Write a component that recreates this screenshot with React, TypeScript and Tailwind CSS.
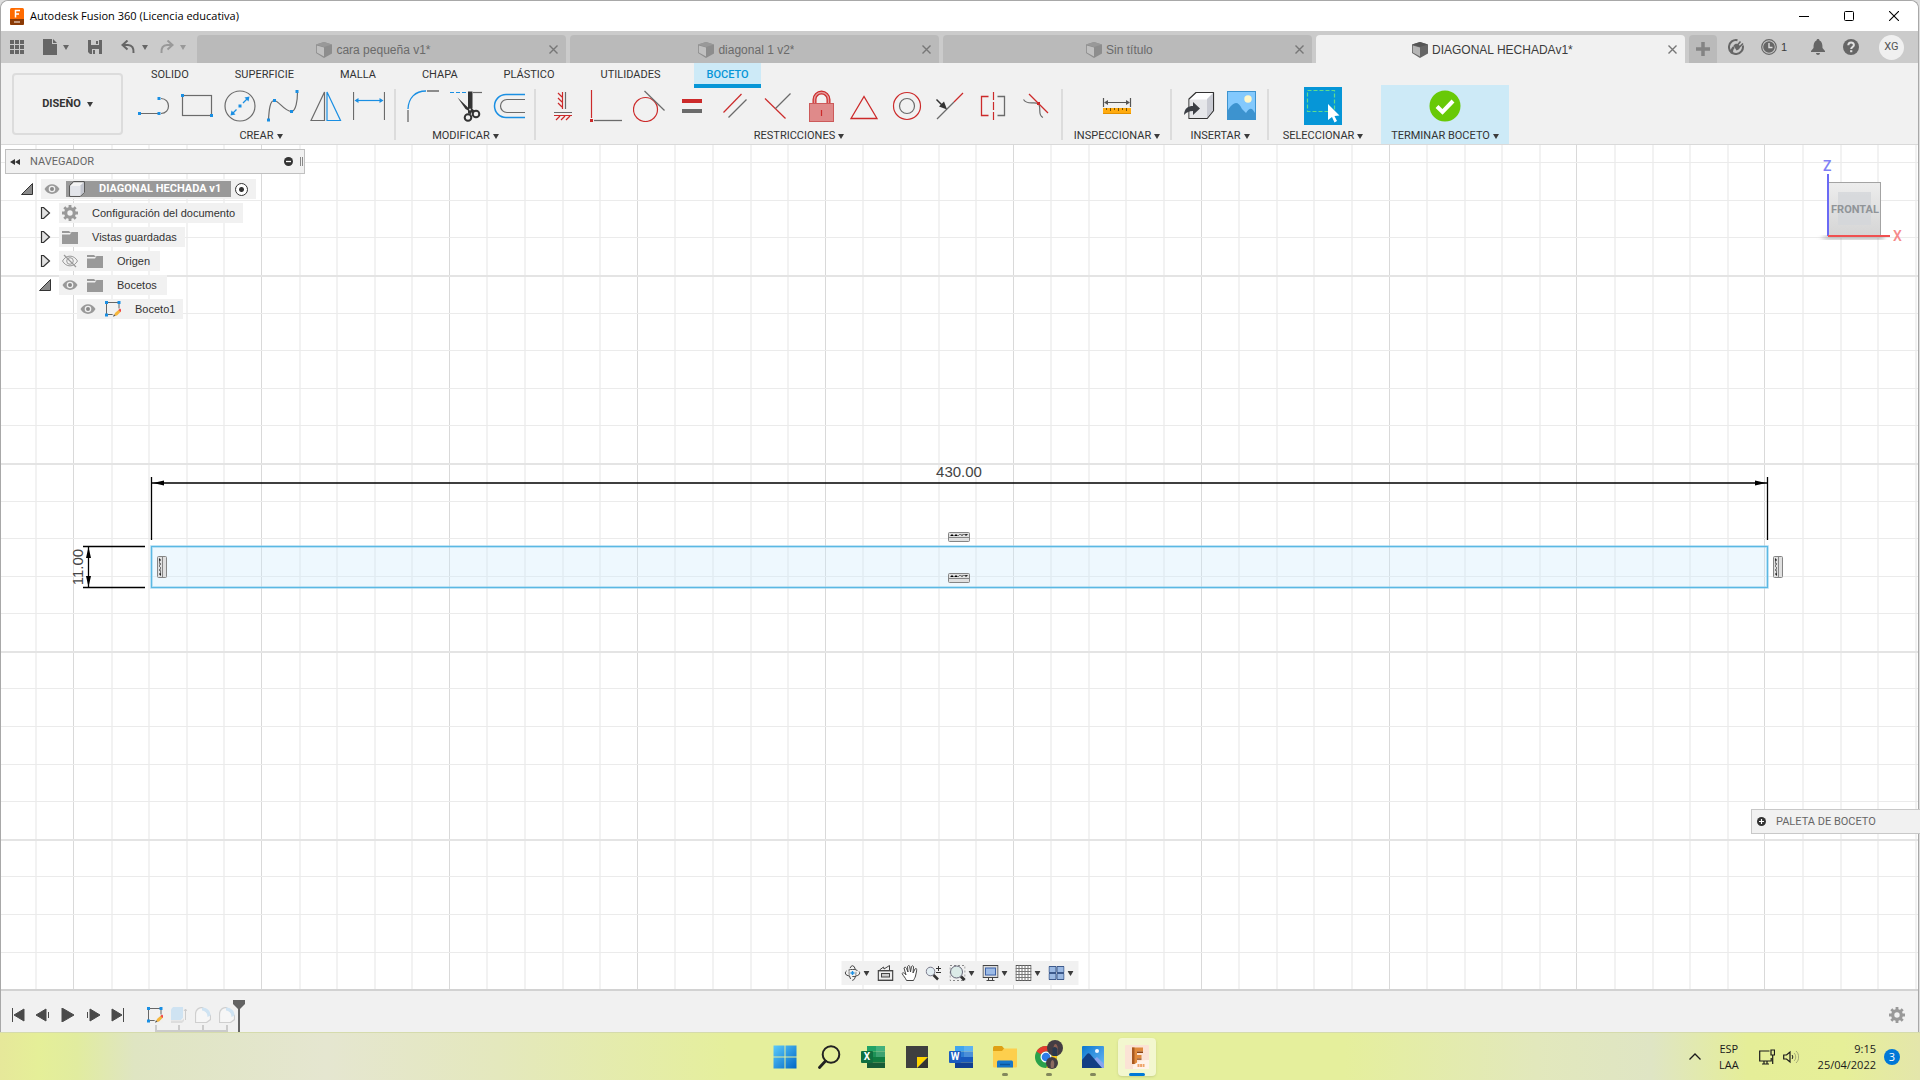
import { type ReactNode } from "react";
import { clsx } from "clsx";

const BLUE = "#1a8fe3";
const GREY = "#6b6b6b";
const RED = "#cc2a2a";

const Caret = ({ className = "text-[#3c3c3c]" }: { className?: string }) => (
  <svg viewBox="0 0 6 5" className={clsx("h-[5px] w-[6px] shrink-0", className)} aria-hidden>
    <path d="M0 0h6L3 5z" fill="currentColor" />
  </svg>
);

const Svg = ({ size = 32, className, children }: { size?: number; className?: string; children: ReactNode }) => (
  <svg
    width={size}
    height={size}
    viewBox={`0 0 ${size} ${size}`}
    fill="none"
    className={clsx("shrink-0", className)}
    aria-hidden
  >
    {children}
  </svg>
);

const Dot = ({ x, y, c = BLUE }: { x: number; y: number; c?: string }) => (
  <rect x={x - 1.5} y={y - 1.5} width="3" height="3" fill={c} />
);

/* ---------- ribbon icons ---------- */

const createTools: { label: string; icon: ReactNode }[] = [
  {
    label: "Línea",
    icon: (
      <Svg>
        <path d="M1.5 23.5H21M23 8.5c10 0 10 15 0 15" stroke={GREY} strokeWidth="1.2" />
        <Dot x={1.5} y={23.5} />
        <Dot x={21} y={23.5} />
        <Dot x={21} y={8.5} />
      </Svg>
    ),
  },
  {
    label: "Rectángulo",
    icon: (
      <Svg>
        <rect x="1.5" y="5.5" width="29" height="20" stroke={GREY} strokeWidth="1.2" />
        <Dot x={1.5} y={5.5} />
        <Dot x={30.5} y={25.5} />
      </Svg>
    ),
  },
  {
    label: "Círculo",
    icon: (
      <Svg>
        <circle cx="16" cy="16" r="15" stroke={GREY} strokeWidth="1.2" />
        <path d="M8.5 23.5l4-4M19 13l4.5-4.5" stroke={BLUE} strokeWidth="1.3" />
        <path d="M6.5 25.5l1-5 4 4zM25.5 6.5l-1 5-4-4z" fill={BLUE} />
        <Dot x={16} y={16} />
      </Svg>
    ),
  },
  {
    label: "Spline",
    icon: (
      <Svg>
        <path d="M1.5 30C2 20 3 10 7.5 10.5S17 21 24.5 21.5C29 21 30.5 10 30.5 2" stroke={GREY} strokeWidth="1.2" />
        <Dot x={1.5} y={30} />
        <Dot x={7.5} y={10.5} />
        <Dot x={24.5} y={21.5} />
        <Dot x={30} y={1.5} />
      </Svg>
    ),
  },
  {
    label: "Simetría",
    icon: (
      <Svg>
        <path d="M1 30.5L14.5 2v28.5z" stroke={GREY} strokeWidth="1.2" />
        <path d="M17 30.5V2l13.5 28.5z" stroke={BLUE} strokeWidth="1.2" />
      </Svg>
    ),
  },
  {
    label: "Cota",
    icon: (
      <Svg>
        <path d="M.5 2v28M31.5 2v28" stroke={GREY} strokeWidth="1.2" />
        <path d="M3 10.5h26" stroke={BLUE} strokeWidth="1.2" />
        <path d="M1.5 10.5l4-2.5v5zM30.5 10.5l-4-2.5v5z" fill={BLUE} />
      </Svg>
    ),
  },
];

const modifyTools: { label: string; icon: ReactNode }[] = [
  {
    label: "Empalme",
    icon: (
      <Svg>
        <path d="M1 19C1.5 8 8 1 19 1" stroke={BLUE} strokeWidth="1.3" />
        <path d="M20 1h12M1 20v12" stroke={GREY} strokeWidth="1.3" />
      </Svg>
    ),
  },
  {
    label: "Recortar",
    icon: (
      <Svg>
        <path d="M0 2.5h17" stroke={BLUE} strokeWidth="1.2" strokeDasharray="4 2" />
        <path d="M23 2.5h9" stroke={GREY} strokeWidth="1.2" />
        <path d="M7.5 7.5l12 11.5 2.5-.5 3.5 3-3 1.5-7-4zM18 1.5h4.5V18l-1.5 6-3-.5z" fill="#333" />
        <circle cx="18" cy="27.5" r="3.3" stroke="#333" strokeWidth="2" />
        <circle cx="26" cy="24" r="3.3" stroke="#333" strokeWidth="2" />
        <circle cx="20" cy="19.5" r="1" fill="#ddd" />
      </Svg>
    ),
  },
  {
    label: "Desfase",
    icon: (
      <Svg>
        <path d="M32 4.5H13a11.5 11.5 0 0 0 0 23h19" stroke={BLUE} strokeWidth="1.5" />
        <path d="M32 9.5H14a6.5 6.5 0 0 0 0 13h18" stroke={GREY} strokeWidth="1.2" />
      </Svg>
    ),
  },
];

const constraintTools: { label: string; icon: ReactNode }[] = [
  {
    label: "Horizontal/Vertical",
    icon: (
      <Svg>
        <path
          d="M15.5 2v17M15 7l-4-4M15 12l-4-4M15 17l-4-4M7 25.5h18M9 30l4-4M14 30l4-4M19 30l4-4"
          stroke={RED}
          strokeWidth="1.2"
        />
        <path d="M18.5 2v17M7 22.5h18" stroke={GREY} strokeWidth="1.2" />
      </Svg>
    ),
  },
  {
    label: "Perpendicular",
    icon: (
      <Svg>
        <path d="M1.5 0v28" stroke={RED} strokeWidth="1.2" />
        <path d="M4 30.5h28" stroke={GREY} strokeWidth="1.3" />
        <Dot x={1.5} y={30.5} c={RED} />
      </Svg>
    ),
  },
  {
    label: "Tangente",
    icon: (
      <Svg>
        <circle cx="12.5" cy="19.5" r="12" stroke={RED} strokeWidth="1.2" />
        <path d="M11.5 1l20 19.5" stroke={GREY} strokeWidth="1.2" />
      </Svg>
    ),
  },
  {
    label: "Igual",
    icon: (
      <Svg>
        <path d="M6 11h20" stroke={RED} strokeWidth="4" />
        <path d="M6 21h20" stroke={GREY} strokeWidth="4" />
      </Svg>
    ),
  },
  {
    label: "Paralela",
    icon: (
      <Svg>
        <path d="M4.5 22.5L22.5 4" stroke={RED} strokeWidth="1.2" />
        <path d="M9.5 27.5l18-18" stroke={GREY} strokeWidth="1.2" />
      </Svg>
    ),
  },
  {
    label: "Coincidente",
    icon: (
      <Svg>
        <path d="M3 8.5l20.5 20" stroke={RED} strokeWidth="1.2" />
        <path d="M13.5 18.5l15-15" stroke={GREY} strokeWidth="1.2" />
      </Svg>
    ),
  },
  {
    label: "Fijar",
    icon: (
      <Svg>
        <path d="M9.5 13V9.5a7 7 0 0 1 14 0V13" stroke={RED} strokeWidth="4" />
        <path d="M9.5 13V9.5a7 7 0 0 1 14 0V13" stroke="#e39a9a" strokeWidth="1.5" />
        <rect x="4.5" y="13.5" width="24" height="18" fill="#df8a8a" stroke="#cc5a5a" />
        <path d="M16.5 20v6" stroke={RED} strokeWidth="1.2" />
      </Svg>
    ),
  },
  {
    label: "Punto medio",
    icon: (
      <Svg>
        <path d="M3 28.5L16 6.5l13 22z" stroke={RED} strokeWidth="1.3" />
      </Svg>
    ),
  },
  {
    label: "Concéntrica",
    icon: (
      <Svg>
        <circle cx="16" cy="16" r="13.5" stroke={RED} strokeWidth="1.2" />
        <circle cx="16" cy="16" r="7.5" stroke={GREY} strokeWidth="1.2" />
      </Svg>
    ),
  },
  {
    label: "Colineal",
    icon: (
      <Svg>
        <path d="M3 29l17-17" stroke={GREY} strokeWidth="1.2" />
        <path d="M20 12l9-9" stroke={RED} strokeWidth="1.3" />
        <path d="M2.5 9.5l6 6" stroke="#333" strokeWidth="1.5" />
        <path d="M13 19.5l-8-3 5-5z" fill="#333" />
      </Svg>
    ),
  },
  {
    label: "Simétrica",
    icon: (
      <Svg>
        <path d="M11.5 6.5h-7v19h7" stroke={RED} strokeWidth="1.3" />
        <path d="M20.5 6.5h7v19h-7" stroke={GREY} strokeWidth="1.3" />
        <path d="M16.5 2v28" stroke={RED} strokeWidth="1.2" strokeDasharray="8 2" />
      </Svg>
    ),
  },
  {
    label: "Curvatura",
    icon: (
      <Svg>
        <path d="M3.5 9.5c4 6 10 2 14.5 4 4 3-1 12 5 14" stroke={GREY} strokeWidth="1.2" />
        <path d="M9 4l19 19" stroke={RED} strokeWidth="1.2" />
        <Dot x={18.5} y={13.5} c={RED} />
      </Svg>
    ),
  },
];

const MeasureIcon = () => (
  <Svg>
    <path d="M2.5 8v9M29.5 8v9M4 12.5h24" stroke="#555" strokeWidth="1.2" />
    <path d="M3 12.5l4-2.5v5zM29 12.5L25 10v5z" fill="#555" />
    <rect x="2" y="18" width="28" height="6" fill="#ffab0f" />
    <path d="M2 23.5h28" stroke="#e39100" />
    <path d="M5.5 18v2M9.5 18v3M13.5 18v2M17.5 18v3M21.5 18v2M25.5 18v3" stroke="#7a5200" />
  </Svg>
);

const InsertIcon = () => (
  <Svg>
    <path d="M6 9l7-6.5h17.5v18L24 28.5H6z" fill="#fff" stroke="#333" strokeLinejoin="round" strokeWidth="1.2" />
    <path d="M24 9l6-6v17.5l-6 7.5z" fill="#c9cbd3" />
    <path d="M6.6 9.5H24V28H6.6z" fill="#e6e7ea" />
    <path d="M1 25c.5-7 4-9 9-9v-4l7 6.5-7 6.5v-4c-4 0-6 1-9 4z" fill="#3c3f45" />
  </Svg>
);

const ImageIcon = () => (
  <Svg>
    <rect x="1.5" y="1.5" width="28" height="28" fill="#83c9fd" stroke="#3d93cf" />
    <path d="M2 20c6-9 10-9 14-1l4 4c4-6 6-5 9 0v6.5H2z" fill="#3d93cf" />
    <circle cx="22" cy="9" r="3.7" fill="#fff7c9" />
  </Svg>
);

const SelectIcon = () => (
  <Svg size={38} className="bg-[#0696d7]">
    <rect x="3.5" y="3.5" width="27" height="21" stroke="#5fdc8c" strokeWidth="1.2" strokeDasharray="4 2" />
    <path d="M24 17v16l4-3 2.5 5.5 2.5-1.5-2.5-5 5-.5z" fill="#fff" />
  </Svg>
);

const CheckIcon = () => (
  <Svg>
    <circle cx="16" cy="16" r="15.5" fill="#68c907" />
    <path d="M8 16.5l5.5 5.5L24 11" stroke="#fff" strokeWidth="4" />
  </Svg>
);

/* ---------- small icons ---------- */

const CubeTab = ({ active }: { active?: boolean }) => (
  <Svg size={16}>
    <path d="M8 0l8 2.5v9L8 16 0 11V2.5z" fill={active ? "#666" : "#8d8d8d"} />
    <path d="M.8 3.5L8 5.5v9L.8 10.5z" fill={active ? "#b5b5b5" : "#c0c0c0"} />
    <path d="M8 0l8 2.5-8 2.5-8-2.5z" fill={active ? "#555" : "#999"} />
  </Svg>
);

const Eye = ({ off }: { off?: boolean }) => (
  <Svg size={16}>
    <path
      d="M.5 8C4 1.5 12 1.5 15.5 8 12 14.5 4 14.5.5 8z"
      fill={off ? "none" : "#999"}
      stroke={off ? "#999" : "none"}
    />
    <circle cx="8" cy="8" r="3.3" fill={off ? "none" : "#efefef"} stroke={off ? "#999" : "none"} />
    {off ? <path d="M2 2l12 12" stroke="#999" strokeWidth="1.2" /> : <circle cx="8" cy="8" r="2" fill="#888" />}
  </Svg>
);

const Folder = () => (
  <Svg size={16}>
    <path d="M0 2h7l2 2H0z" fill="#999" />
    <path d="M0 5.5h8L9.5 3H16v12H0z" fill="#999" />
  </Svg>
);

const Gear = () => (
  <Svg size={16}>
    <circle cx="8" cy="8" r="4.3" stroke="#999" strokeWidth="3.2" />
    <path
      d="M8 0v3M8 13v3M0 8h3M13 8h3M2.3 2.3l2.2 2.2M11.5 11.5l2.2 2.2M13.7 2.3l-2.2 2.2M4.5 11.5l-2.2 2.2"
      stroke="#999"
      strokeWidth="2.8"
    />
  </Svg>
);

const SketchIcon = () => (
  <Svg size={16}>
    <path d="M1.5 1.5H14v12H1.5z" stroke="#666" />
    <path d="M7 16l1-4 6-5 2 2v7z" fill="#f0f0f0" />
    <Dot x={1.5} y={1.5} />
    <Dot x={14} y={1.5} />
    <Dot x={1.5} y={14} />
    <path d="M9 15l1-3 4-3.5 2 2-4 4z" fill="#f5b53a" />
    <path d="M13.5 9L15 7.5 16.5 9l-1 2z" fill="#f0434c" />
    <path d="M8 15.8l1-2.5 1.5 1.5z" fill="#555" />
  </Svg>
);

const BodyIcon = () => (
  <Svg size={16}>
    <path d="M.7 4.5l4-3.8h10.6v10.6l-4 4H.7z" fill="#f4f4f4" stroke="#444" strokeLinejoin="round" />
    <path d="M11.3 4.5l3.5-3.3v10l-3.5 3.6z" fill="#c3c6cf" />
    <path d="M1.2 5h10v9.8h-10z" fill="#e3e5ea" />
  </Svg>
);

const CloseX = () => (
  <svg viewBox="0 0 9 9" className="size-[9px]" fill="none" aria-hidden>
    <path d="M.5.5l8 8M8.5.5l-8 8" stroke="currentColor" strokeWidth="1.4" />
  </svg>
);

/* ---------- window chrome ---------- */

const TitleBar = () => (
  <header className="flex h-[30px] shrink-0 items-center bg-white pl-[9px] pr-[19px]">
    <svg width="14" height="17" viewBox="0 0 14 17" aria-hidden>
      <rect width="14" height="17" rx="1.5" fill="#ff6b00" />
      <path d="M0 11h14v4.5a1.5 1.5 0 0 1-1.5 1.5h-11A1.5 1.5 0 0 1 0 15.5z" fill="#8a3a06" />
      <path d="M5.5 9.5v-7H10M5.5 6H9" stroke="#fff" strokeWidth="1.5" fill="none" />
      <path d="M4 14h6" stroke="#d9b8a3" strokeWidth="1.5" />
    </svg>
    <h1 className="ml-[6px] flex-1 font-['Open_Sans',sans-serif] text-[11px] leading-4 text-black">
      Autodesk Fusion 360 (Licencia educativa)
    </h1>
    <div className="flex items-center gap-[35px] text-black">
      <button type="button" aria-label="Minimizar">
        <svg width="10" height="10" viewBox="0 0 10 10" aria-hidden>
          <path d="M0 5.5h10" stroke="currentColor" />
        </svg>
      </button>
      <button type="button" aria-label="Maximizar">
        <svg width="10" height="10" viewBox="0 0 10 10" fill="none" aria-hidden>
          <rect x=".5" y=".5" width="9" height="9" rx="1" stroke="currentColor" />
        </svg>
      </button>
      <button type="button" aria-label="Cerrar">
        <svg width="10" height="10" viewBox="0 0 10 10" fill="none" aria-hidden>
          <path d="M0 0l10 10M10 0L0 10" stroke="currentColor" strokeWidth="1.1" />
        </svg>
      </button>
    </div>
  </header>
);

const documents = [
  { name: "cara pequeña v1*" },
  { name: "diagonal 1 v2*" },
  { name: "Sin título" },
  { name: "DIAGONAL HECHADAv1*", active: true },
];

const DocumentBar = () => (
  <div className="flex h-8 shrink-0 items-end bg-[#cbcbcb] text-[#666]">
    <div className="flex h-8 w-[196px] shrink-0 items-center pl-[9px]">
      <button type="button" aria-label="Panel de datos">
        <Svg size={14}>
          {[0, 5, 10].map((y) => (
            <path key={y} d={`M0 ${y + 2}h4M5 ${y + 2}h4M10 ${y + 2}h4`} stroke="#666" strokeWidth="4" />
          ))}
        </Svg>
      </button>
      <button type="button" aria-label="Archivo" className="ml-[19px] flex items-center gap-[6px]">
        <svg width="14" height="16" viewBox="0 0 14 16" aria-hidden>
          <path d="M0 0h9v5h5v11H0zM10 0l4 4h-4z" fill="#666" />
        </svg>
        <Caret className="text-[#666]" />
      </button>
      <button type="button" aria-label="Guardar" className="ml-[19px]">
        <Svg size={14}>
          <path d="M0 0h14v14H2l-2-2z" fill="#666" />
          <path d="M3 0h8v5H3zM4 9h7v5H4z" fill="#cbcbcb" />
          <path d="M8 1h2v3H8zM5 10h2v4H5z" fill="#666" />
        </Svg>
      </button>
      <button type="button" aria-label="Deshacer" className="ml-[19px] flex items-center gap-[7px]">
        <Svg size={14}>
          <path d="M2 5h5c4 0 6 3 5.5 8" stroke="#666" strokeWidth="2" />
          <path d="M6.5.5L1.5 5l5 4.5" stroke="#666" strokeWidth="2" />
        </Svg>
        <Caret className="text-[#666]" />
      </button>
      <button type="button" aria-label="Rehacer" className="ml-3 flex items-center gap-[6px]">
        <Svg size={14}>
          <path d="M12 5H7c-4 0-6 3-5.5 8" stroke="#999" strokeWidth="2" />
          <path d="M7.5.5l5 4.5-5 4.5" stroke="#999" strokeWidth="2" />
        </Svg>
        <Caret className="text-[#999]" />
      </button>
    </div>

    <nav className="flex h-7 min-w-0 flex-1 gap-1">
      {documents.map(({ name, active }) => (
        <div
          key={name}
          className={clsx(
            "flex min-w-0 flex-1 items-center rounded-t pl-px pr-2",
            active ? "bg-[#f1f1f1] text-[#3c3c3c]" : "bg-[#bababa] text-[#6a6a6a]",
          )}
        >
          <button type="button" className="flex min-w-0 flex-1 items-center justify-center gap-1 pt-px text-xs">
            <CubeTab active={active} />
            <span className="truncate">{name}</span>
          </button>
          <button type="button" aria-label={`Cerrar ${name}`} className="text-[#777]">
            <CloseX />
          </button>
        </div>
      ))}
    </nav>

    <button
      type="button"
      aria-label="Nuevo diseño"
      className="ml-1 flex h-7 w-7 shrink-0 items-center justify-center rounded-t bg-[#bababa]"
    >
      <Svg size={14}>
        <path d="M7 0v14M0 7h14" stroke="#848484" strokeWidth="3.5" />
      </Svg>
    </button>

    <div className="flex h-8 shrink-0 items-center pl-[11px] pr-[14px]">
      <button type="button" aria-label="Extensiones">
        <Svg size={16}>
          <path d="M9.5 1.2A7 7 0 1 0 14.8 6.5" stroke="#666" strokeWidth="2" />
          <path d="M4 14.5c-.5-3.5 0-5 2-6.5" stroke="#666" strokeWidth="2.4" />
          <path d="M5.5 6.5c1.5-2 3.5-2.5 5-1L12 7c.5 2-1 4-3.5 4.5z" fill="#666" />
          <path d="M9.5 6l3-3.5M11.5 8L15 4.5" stroke="#666" strokeWidth="1.6" />
        </Svg>
      </button>
      <button type="button" className="ml-[17px] flex items-center gap-1 text-[11px] text-[#3c3c3c]">
        <Svg size={16}>
          <circle cx="8" cy="8" r="7.3" stroke="#666" strokeWidth="1.2" />
          <circle cx="8" cy="8" r="5.8" fill="#666" />
          <path d="M8 4v4.5h3.5" stroke="#ddd" strokeWidth="1.4" />
        </Svg>
        1
      </button>
      <button type="button" aria-label="Notificaciones" className="ml-[23px]">
        <Svg size={16}>
          <path
            d="M8 0c1 0 1.5.7 1.5 1.5C12 2.5 12.5 5 12.5 9l2.5 3v1H1v-1l2.5-3c0-4 .5-6.5 3-7.5C6.500.7 7 0 8 0zM6 14h4c0 2.5-4 2.5-4 0z"
            fill="#666"
          />
        </Svg>
      </button>
      <button type="button" aria-label="Ayuda" className="ml-[17px]">
        <Svg size={16}>
          <circle cx="8" cy="8" r="8" fill="#666" />
          <path d="M5.3 6.3c0-3.8 5.6-3.6 5.6-.3 0 2-2.7 2-2.7 4" stroke="#e0e0e0" strokeWidth="2" />
          <path d="M7.1 11.2h2.2v2H7.1z" fill="#e0e0e0" />
        </Svg>
      </button>
      <button
        type="button"
        className="ml-5 flex size-[25px] items-center justify-center rounded-full bg-[#f0f0f0] font-['Roboto',sans-serif] text-[11px] text-[#555]"
      >
        XG
      </button>
    </div>
  </div>
);

/* ---------- ribbon ---------- */

const ribbonTabs = ["SOLIDO", "SUPERFICIE", "MALLA", "CHAPA", "PLÁSTICO", "UTILIDADES", "BOCETO"];

const RibbonGroup = ({ label, className, children }: { label: string; className?: string; children: ReactNode }) => (
  <section className={clsx("flex flex-col items-center pt-[2px]", className)}>
    <div className="flex h-[38px] items-center">{children}</div>
    <button type="button" className="flex h-[19px] items-center gap-[3px] whitespace-nowrap pt-[3px]">
      {label}
      <Caret />
    </button>
  </section>
);

const Tool = ({ label, children }: { label: string; children: ReactNode }) => (
  <button type="button" aria-label={label} className="flex w-[43px] justify-center">
    {children}
  </button>
);

const Separator = () => <div className="ml-1 mr-[5px] mt-1 h-[51px] w-[2px] shrink-0 bg-[#dcdcdc]" />;

const Ribbon = () => (
  <div className="flex h-[82px] shrink-0 border-b border-[#d9d9d9] bg-[#f1f1f1] font-['Roboto',sans-serif] text-[11px] text-[#333]">
    <button
      type="button"
      className="ml-[11px] mt-[10px] flex h-[62px] w-[111px] items-center justify-center gap-[6px] rounded border-2 border-[#dcdcdc] font-bold"
    >
      DISEÑO
      <Caret />
    </button>
    <div className="flex flex-1 flex-col">
      <nav className="ml-4 flex h-[22px] items-start gap-[22px]">
        {ribbonTabs.map((tab) => (
          <button
            key={tab}
            type="button"
            className={clsx(
              "h-[25px] border-b-4 px-3 pt-[3px]",
              tab === "BOCETO"
                ? "border-[#0696d7] bg-[#cdeaf7] font-medium text-[#0696d7]"
                : "border-transparent",
            )}
          >
            {tab}
          </button>
        ))}
      </nav>
      <div className="ml-[9px] flex">
        <RibbonGroup label="CREAR">
          {createTools.map(({ label, icon }) => (
            <Tool key={label} label={label}>
              {icon}
            </Tool>
          ))}
        </RibbonGroup>
        <Separator />
        <RibbonGroup label="MODIFICAR">
          {modifyTools.map(({ label, icon }) => (
            <Tool key={label} label={label}>
              {icon}
            </Tool>
          ))}
        </RibbonGroup>
        <Separator />
        <RibbonGroup label="RESTRICCIONES">
          {constraintTools.map(({ label, icon }) => (
            <Tool key={label} label={label}>
              {icon}
            </Tool>
          ))}
        </RibbonGroup>
        <Separator />
        <RibbonGroup label="INSPECCIONAR" className="w-[98px]">
          <Tool label="Medir">
            <MeasureIcon />
          </Tool>
        </RibbonGroup>
        <Separator />
        <RibbonGroup label="INSERTAR">
          <Tool label="Insertar derivación">
            <InsertIcon />
          </Tool>
          <Tool label="Lienzo">
            <ImageIcon />
          </Tool>
        </RibbonGroup>
        <Separator />
        <RibbonGroup label="SELECCIONAR" className="w-[98px]">
          <button type="button" aria-label="Seleccionar">
            <SelectIcon />
          </button>
        </RibbonGroup>
        <RibbonGroup label="TERMINAR BOCETO" className="ml-[9px] w-[128px] bg-[#cdeaf7]">
          <Tool label="Terminar">
            <CheckIcon />
          </Tool>
        </RibbonGroup>
      </div>
    </div>
  </div>
);

/* ---------- sketch canvas ---------- */

const STEP = 37.587;

const Grid = () => (
  <g shapeRendering="crispEdges">
    {Array.from({ length: 52 }, (_, i) => {
      const x = Math.round(72 + (i - 1) * STEP);
      const major = (i - 1) % 5 === 0;
      return <rect key={i} x={x} y="0" width={major ? 1 : 2} height="100%" fill={major ? "#d9d9d9" : "#f2f2f2"} />;
    })}
    {Array.from({ length: 26 }, (_, i) => {
      const y = Math.round(130 + (i - 3) * STEP);
      const major = (i - 3) % 5 === 0;
      return <rect key={i} x="0" y={y} width="100%" height={major ? 2 : 1} fill={major ? "#e4e4e4" : "#ebebeb"} />;
    })}
  </g>
);

const HatchGlyph = ({ x, y, vertical }: { x: number; y: number; vertical?: boolean }) => (
  <g transform={`translate(${x} ${y})${vertical ? " rotate(-90) translate(-22 0)" : ""}`}>
    <rect x=".5" y=".5" width="21" height="9" rx="1" fill="#e0e0e0" stroke="#858585" />
    <path d="M1 5.5h20" stroke="#858585" />
    <path d="M2 4l2-2 2 2 2-2 2 2 2-2 2 2 2-2 2 2 2-2" stroke="#777" />
  </g>
);

const Sketch = () => (
  <svg className="absolute inset-0 h-full w-full" role="img" aria-label="Boceto1">
    <Grid />
    <rect x="151" y="402" width="1615" height="40" fill="#cfecfb" fillOpacity=".35" />
    <rect x="150.5" y="401.5" width="1616" height="41" fill="none" stroke="#a9d9f1" strokeWidth="3" strokeOpacity=".5" />
    <rect x="150.5" y="401.5" width="1616" height="41" fill="none" stroke="#5bb8e3" strokeWidth="1.3" />
    <g stroke="#000" strokeWidth="1.3">
      <path d="M150.5 332v63M1766.5 332v63M151 338h1615" />
      <path d="M82 401.5h62M82 442.5h62M87.5 402v40" />
    </g>
    <path d="M152 338l11-2.5v5zM1765 338l-11-2.5v5zM87.5 402l-2.5 11h5zM87.5 442l-2.5-11h5z" fill="#000" />
    <HatchGlyph x={947} y={387} />
    <HatchGlyph x={947} y={428} />
    <HatchGlyph x={156} y={411} vertical />
    <HatchGlyph x={1772} y={411} vertical />
    <text x="958" y="332" textAnchor="middle" fontSize="15" fill="#444">
      430.00
    </text>
    <text transform="translate(82 422) rotate(-90)" textAnchor="middle" fontSize="15" fill="#444">
      11.00
    </text>
  </svg>
);

const Twisty = ({ open }: { open?: boolean }) => (
  <Svg size={12}>
    {open ? (
      <path d="M11.5.5v11H.5z" fill="#8a8a8a" stroke="#333" />
    ) : (
      <path d="M2.5.5h2l6 5.5-6 5.5h-2z" fill="#e2e2e2" stroke="#333" strokeWidth="1.2" />
    )}
  </Svg>
);

const treeRows: { label: string; icons: ReactNode; open?: boolean; nested?: boolean }[] = [
  { label: "Configuración del documento", icons: <Gear /> },
  { label: "Vistas guardadas", icons: <Folder /> },
  {
    label: "Origen",
    nested: true,
    icons: (
      <>
        <Eye off />
        <Folder />
      </>
    ),
  },
  {
    label: "Bocetos",
    nested: true,
    open: true,
    icons: (
      <>
        <Eye />
        <Folder />
      </>
    ),
  },
];

const Navigator = () => (
  <aside className="absolute left-1 top-1 w-[300px] text-[11px] text-[#333]">
    <div className="flex h-[25px] items-center border border-[#c0c0c0] bg-[#f1f1f1] pl-1 pr-px font-['Roboto',sans-serif] text-[#666]">
      <button type="button" aria-label="Contraer">
        <svg width="10" height="6" viewBox="0 0 10 6" aria-hidden>
          <path d="M5 0v6L0 3zM10 0v6L5 3z" fill="#333" />
        </svg>
      </button>
      <span className="ml-[10px] flex-1 pt-[2px]">NAVEGADOR</span>
      <button type="button" aria-label="Minimizar navegador">
        <Svg size={9}>
          <circle cx="4.5" cy="4.5" r="4.5" fill="#333" />
          <path d="M2 4.5h5" stroke="#fff" strokeWidth="1.3" />
        </Svg>
      </button>
      <div className="ml-[7px] h-[9px] w-[3px] border-x border-[#888]" />
    </div>
    <ul className="mt-[5px] flex flex-col gap-1">
      <li className="flex h-5 items-center gap-2 pl-4">
        <Twisty open />
        <div className="flex h-5 items-center bg-[#f1f1f1] pl-[3px] pr-2">
          <Eye />
          <span className="ml-[6px] flex h-4 items-center gap-[14px] bg-[#999] pl-[3px] pr-[10px] font-['Roboto',sans-serif] font-bold text-white">
            <BodyIcon />
            DIAGONAL HECHADA v1
          </span>
          <input
            type="radio"
            defaultChecked
            aria-label="Activar componente"
            className="ml-1 size-[13px] appearance-none rounded-full border border-[#333] bg-[radial-gradient(circle,#333_2px,#fff_3px)]"
          />
        </div>
      </li>
      {treeRows.map(({ label, icons, open, nested }) => (
        <li key={label} className="flex h-5 items-center gap-2 pl-[34px]">
          <Twisty open={open} />
          <div className={clsx("flex h-5 items-center gap-[9px] bg-[#f1f1f1] pl-[3px]", nested ? "pr-[10px]" : "pr-2")}>
            {icons}
            <span className="pl-[5px]">{label}</span>
          </div>
        </li>
      ))}
      <li className="flex h-5 items-center pl-[72px]">
        <div className="flex h-5 items-center gap-[9px] bg-[#f1f1f1] pl-[3px] pr-2">
          <Eye />
          <SketchIcon />
          <span className="pl-[5px]">Boceto1</span>
        </div>
      </li>
    </ul>
  </aside>
);

const ViewCube = () => (
  <div className="absolute right-[14px] top-[12px] h-[90px] w-[90px]">
    <svg width="90" height="90" viewBox="0 0 90 90" fill="none" aria-hidden>
      <defs>
        <linearGradient id="face" x1="0" y1="0" x2="0" y2="1">
          <stop offset="0" stopColor="#ededed" />
          <stop offset="1" stopColor="#d5d5d5" />
        </linearGradient>
        <filter id="soft">
          <feGaussianBlur stdDeviation="2" />
        </filter>
      </defs>
      <path d="M6 82h64v-3H14z" fill="#999" filter="url(#soft)" />
      <rect x="14.5" y="25.5" width="52" height="53" fill="url(#face)" stroke="#a3a3a3" />
      <rect x="24" y="35" width="33" height="33" fill="#d3d6d9" fillOpacity=".8" />
      <path d="M14 17v62" stroke="#6a6af5" strokeWidth="2" />
      <path d="M14 79h62" stroke="#f05050" strokeWidth="2" />
    </svg>
    <span className="absolute left-[9px] top-px font-['Roboto',sans-serif] text-[14px] font-medium leading-4 text-[#8080f5]">
      Z
    </span>
    <span className="absolute left-[79px] top-[71px] font-['Roboto',sans-serif] text-[14px] font-medium leading-4 text-[#f58a8a]">
      X
    </span>
    <span className="absolute left-[14px] top-[45px] w-[54px] text-center font-['Roboto',sans-serif] text-[11px] font-bold leading-4 text-[#909498]">
      FRONTAL
    </span>
  </div>
);

const viewTools: { label: string; caret?: boolean; icon: ReactNode }[] = [
  {
    label: "Órbita",
    caret: true,
    icon: (
      <Svg size={16}>
        <ellipse cx="8" cy="8" rx="7.3" ry="3.5" stroke="#444" strokeDasharray="9 2" />
        <ellipse cx="8" cy="8" rx="3.3" ry="7.3" stroke="#444" strokeDasharray="9 2" />
        <path d="M5 5h6v6H5z" fill="#f1f1f1" />
        <path d="M8 6v4M6 8h4" stroke={BLUE} strokeWidth="1.4" />
      </Svg>
    ),
  },
  {
    label: "Mirar a",
    icon: (
      <Svg size={16}>
        <rect x=".7" y="5.7" width="14.6" height="9.6" fill="#eee" stroke="#444" strokeWidth="1.4" />
        <rect x="4" y="8.5" width="8" height="3.5" fill="#ccc" stroke="#444" />
        <path d="M2 5l4-3 .5 2L12 .5V5" stroke="#444" />
      </Svg>
    ),
  },
  {
    label: "Encuadre",
    icon: (
      <Svg size={16}>
        <path
          d="M5 15.5C4 13 2 11 .5 8.5 1.5 7 3 8 4.5 10L2.5 3c1-1.5 2-.5 2.5.5L6.5 7 6 1.5C7 0 8 .5 8.2 1.5L9 7l1-5.500c1-1.3 2-.5 2 .5l-.5 6 2-4c1-1 2-.3 1.8 1L14 11c-.5 2-1.500 3-2 4.500z"
          fill="#fff"
          stroke="#444"
        />
      </Svg>
    ),
  },
  {
    label: "Zoom",
    icon: (
      <Svg size={16}>
        <circle cx="5" cy="6.5" r="4.3" fill="#e3eef3" stroke="#778" />
        <path d="M8 10l4.5 4.5" stroke="#333" strokeWidth="2.5" />
        <path d="M13 1v5M10.5 3.5h5M10.5 7.5h5" stroke="#333" />
      </Svg>
    ),
  },
  {
    label: "Ajustar",
    caret: true,
    icon: (
      <Svg size={16}>
        <rect x=".5" y=".5" width="15" height="15" stroke="#888" strokeDasharray="2 2" />
        <circle cx="7" cy="7" r="6" fill="#dcebe8" stroke="#667" />
        <path d="M11.5 11.5L15 15" stroke="#333" strokeWidth="3" />
      </Svg>
    ),
  },
  {
    label: "Configuración de visualización",
    caret: true,
    icon: (
      <Svg size={16}>
        <rect x=".5" y=".5" width="15" height="12" fill="#ddd" stroke="#444" />
        <rect x="3" y="3" width="10" height="7" fill="#9dbbe6" stroke="#3c62a8" />
        <path d="M6 13v2M10 13v2M4 15.5h8" stroke="#444" />
      </Svg>
    ),
  },
  {
    label: "Rejilla y forzados",
    caret: true,
    icon: (
      <Svg size={16}>
        <rect x=".5" y=".5" width="15" height="15" fill="#fff" stroke="#555" />
        <path d="M3.5 0v16M6.5 0v16M9.5 0v16M12.5 0v16M0 3.5h16M0 6.5h16M0 9.5h16M0 12.5h16" stroke="#777" />
      </Svg>
    ),
  },
  {
    label: "Ventanas gráficas",
    caret: true,
    icon: (
      <Svg size={16}>
        {["M.5 1.5h7v6h-7z", "M8.5 1.5h7v6h-7z", "M.5 8.5h7v6h-7z", "M8.5 8.5h7v6h-7z"].map((d) => (
          <path key={d} d={d} fill="#9bb9e3" stroke="#3d5a8c" />
        ))}
      </Svg>
    ),
  },
];

const ViewToolbar = () => (
  <div className="absolute bottom-1 left-1/2 flex h-6 -translate-x-1/2 items-center gap-[6px] bg-[#f1f1f1] px-[3px]">
    {viewTools.map(({ label, caret, icon }) => (
      <button key={label} type="button" aria-label={label} className="flex items-center gap-[3px] pr-[2px]">
        {icon}
        {caret && <Caret />}
      </button>
    ))}
  </div>
);

const Canvas = () => (
  <main className="relative min-h-0 flex-1 bg-white">
    <Sketch />
    <Navigator />
    <ViewCube />
    <ViewToolbar />
    <button
      type="button"
      className="absolute -right-[2px] bottom-[155px] flex h-[25px] w-[169px] items-center gap-[10px] border border-r-0 border-[#c8c8c8] bg-[#f1f1f1] pl-[5px] font-['Roboto',sans-serif] text-[11px] text-[#666]"
    >
      <Svg size={9}>
        <circle cx="4.5" cy="4.5" r="4.5" fill="#333" />
        <path d="M2 4.5h5M4.5 2v5" stroke="#fff" strokeWidth="1.2" />
      </Svg>
      <span className="pt-[2px]">PALETA DE BOCETO</span>
    </button>
  </main>
);

/* ---------- timeline ---------- */

const playback = [
  { label: "Ir al inicio", d: "M1.5 0v14M13 1v12L3 7z" },
  { label: "Paso atrás", d: "M10 1v12L0 7zM12.5 4v6" },
  { label: "Reproducir", d: "M1 0v14L13 7z" },
  { label: "Paso adelante", d: "M4 1v12l10-6zM1.5 4v6" },
  { label: "Ir al final", d: "M1 1v12l10-6zM12.5 0v14" },
];

const FilletFeature = () => (
  <Svg size={16}>
    <path d="M.5 15.5V7c0-4 3-6.5 7-6.5l8 8v4l-4 3z" fill="#f6f6f6" stroke="#cfcfcf" strokeWidth="1.2" />
    <path d="M7 .5c5 0 8.5 3 8.5 8l-3 1.5c0-4-2-6-5.5-6.5z" fill="#cfe3f2" />
  </Svg>
);

const Timeline = () => (
  <footer className="flex h-[43px] shrink-0 items-center overflow-hidden border-t-2 border-[#d2d2d2] bg-[#f1f1f1] pl-[10px] pr-[13px]">
    <div className="mt-[6px] flex gap-[11px]">
      {playback.map(({ label, d }) => (
        <button key={label} type="button" aria-label={label}>
          <Svg size={14}>
            <path d={d} fill="#4a4a4a" stroke="#4a4a4a" />
          </Svg>
        </button>
      ))}
    </div>
    <div className="relative ml-[22px] mt-[6px] flex gap-2">
      <SketchIcon />
      <Svg size={16}>
        <path d="M0 13.5h11l2-2V14l-2 2H0z" fill="#ddd" />
        <path d="M0 2.5L2 0h10v10.5L10 13H0z" fill="#cfe3f2" />
        <path d="M14.5 2v11M13 4l1.5-2L16 4" stroke="#ccc" />
      </Svg>
      <FilletFeature />
      <FilletFeature />
      <svg width="92" height="33" viewBox="0 0 92 33" fill="none" className="absolute -top-[7px] left-2" aria-hidden>
        <path d="M1 25v6h71v-6M24 25v6M48 25v6" stroke="#cbcbcb" strokeWidth="2" />
        <path d="M78 0h12v4l-6 6-6-6z" fill="#636363" />
        <path d="M84 8v25" stroke="#636363" strokeWidth="2" />
      </svg>
    </div>
    <button type="button" aria-label="Preferencias de línea de tiempo" className="ml-auto mt-[6px]">
      <Gear />
    </button>
  </footer>
);

/* ---------- taskbar ---------- */

const OfficeIcon = ({ letter, shades, tile }: { letter: string; shades: string[]; tile: string }) => (
  <div className="relative h-[22px] w-6">
    <svg width="24" height="22" viewBox="0 0 24 22" aria-hidden>
      {shades.map((c, i) => (
        <rect key={c} x="6" y={i * 5.5} width="18" height="5.5" fill={c} />
      ))}
      <rect x="15" width="9" height="11" fill="#fff" fillOpacity=".15" />
      <rect y="5" width="12" height="12" rx="1" fill={tile} />
    </svg>
    <span className="absolute left-0 top-[5px] w-3 text-center font-['Roboto',sans-serif] text-[10px] font-bold leading-3 text-white">
      {letter}
    </span>
  </div>
);

const taskbarApps: { label: string; running?: boolean; active?: boolean; icon: ReactNode }[] = [
  {
    label: "Inicio",
    icon: (
      <Svg size={24}>
        <defs>
          <linearGradient id="win" x1="0" y1="0" x2="1" y2="1">
            <stop offset="0" stopColor="#5ccbfb" />
            <stop offset="1" stopColor="#0067c6" />
          </linearGradient>
        </defs>
        <path d="M.5.5h11v11H.5zM12.5.5h11v11h-11zM.5 12.5h11v11H.5zM12.5 12.5h11v11h-11z" fill="url(#win)" />
      </Svg>
    ),
  },
  {
    label: "Buscar",
    icon: (
      <Svg size={24}>
        <circle cx="14" cy="9.5" r="8.3" stroke="#222" strokeWidth="2" />
        <path d="M8.5 16l-6 6.5" stroke="#222" strokeWidth="2.8" strokeLinecap="round" />
      </Svg>
    ),
  },
  { label: "Excel", icon: <OfficeIcon letter="X" shades={["#21a366", "#1d9257", "#107c41", "#185c37"]} tile="#107040" /> },
  {
    label: "Notas rápidas",
    icon: (
      <Svg size={22}>
        <path d="M0 0h22v11H11v11H0z" fill="#3f3f3f" />
        <path d="M11 22V11h11z" fill="#ffd400" />
        <path d="M11 22h11V11z" fill="#333" />
      </Svg>
    ),
  },
  { label: "Word", icon: <OfficeIcon letter="W" shades={["#41a5ee", "#2b7cd3", "#185abd", "#103f91"]} tile="#1b5cbe" /> },
  {
    label: "Explorador de archivos",
    running: true,
    icon: (
      <Svg size={24}>
        <path d="M0 3c0-1 .5-2 1.5-2H9l2.5 3v4H0z" fill="#dfa014" />
        <path d="M0 6h9l2-2.5h13V21c0 1-.5 1.5-1.5 1.5h-21C.5 22.500 0 22 0 21z" fill="#fdcf4d" />
        <path d="M4 22.5v-5c0-1.5.5-2 2-2h12c1.5 0 2 .5 2 2v5z" fill="#1677c9" />
        <path d="M7 19.5h10" stroke="#0b559b" strokeWidth="1.5" />
      </Svg>
    ),
  },
  {
    label: "Chrome",
    running: true,
    icon: (
      <svg width="28" height="30" viewBox="0 0 28 30" className="-mt-1" aria-hidden>
        <circle cx="11" cy="17" r="11" fill="#2aa14b" />
        <path d="M11 6a11 11 0 0 1 9.5 5.5H11a5.5 5.5 0 0 0-5 3l-4.5-3A11 11 0 0 1 11 6z" fill="#e53b2f" />
        <path d="M20.5 11.5A11 11 0 0 1 11 28l5-8.5a5.5 5.5 0 0 0 0-5l-1-3z" fill="#fcc419" />
        <circle cx="11" cy="17" r="5.5" fill="#fff" />
        <circle cx="11" cy="17" r="4.3" fill="#2f7de8" />
        <circle cx="20" cy="8" r="8" fill="#443d43" />
        <path d="M18.5 15c-1-5 0-11 2-11s3 5 2 11z" fill="#8c5f52" />
        <path d="M17.5 8c2-2 4-1 5 1v7h-5z" fill="#29394e" />
        <circle cx="17" cy="23" r="6" fill="#443d43" />
        <path d="M16 28c-1-4 0-8 1.5-8s2.5 4 1 8z" fill="#8c6a60" />
      </svg>
    ),
  },
  {
    label: "Fotos",
    running: true,
    icon: (
      <Svg size={22}>
        <defs>
          <linearGradient id="sky" x1="0" y1="0" x2="1" y2="1">
            <stop offset="0" stopColor="#0a78cf" />
            <stop offset="1" stopColor="#6db8f5" />
          </linearGradient>
        </defs>
        <rect width="22" height="22" rx="1" fill="url(#sky)" />
        <path d="M11 14l4-3 7 7v4H11z" fill="#8aa4ee" />
        <path d="M0 14l5-6c1-1 2-1 3 0l12 14H0z" fill="#123f84" />
        <circle cx="15" cy="5" r="2" fill="#f4f8ff" />
      </Svg>
    ),
  },
  {
    label: "Fusion 360",
    running: true,
    active: true,
    icon: (
      <Svg size={24}>
        <rect width="24" height="24" rx="1" fill="#fbe3d5" />
        <path d="M7 2.5h11v4h-6V10h4.5v3.5H12V19H7z" fill="#e08a3c" />
        <path d="M7 2.5h2.5V19H7z" fill="#a85a22" />
        <path d="M12 6.5h6V8h-6zM12 13.5h4.5v1.3H12z" fill="#8a4514" />
        <path d="M8 21c4-5 9-6 16-6v9H8z" fill="#fff3eb" />
        <path d="M12.5 20.5h7" stroke="#efa269" strokeWidth="3" strokeDasharray="2 .6" />
      </Svg>
    ),
  },
];

const Taskbar = () => (
  <footer className="flex h-12 shrink-0 items-center border-t border-[#d5dbad] bg-[linear-gradient(90deg,#e6e89a_0%,#e5ef98_2%,#e1ec9f_4%,#dfe5c2_7%,#e5e6d0_17%,#e4e8bd_26%,#e5ef9c_38%,#e5ef9c_70%,#e2e8bc_80%,#dfe5c4_86%,#e5ee98_91%,#e6ef98_96%,#e4e6ab_100%)] px-5 font-['Open_Sans',sans-serif] text-[11px] text-[#1a1a1a]">
    <div className="flex-1" />
    <nav className="flex pl-[2px]">
      {taskbarApps.map(({ label, running, active, icon }) => (
        <button
          key={label}
          type="button"
          aria-label={label}
          className={clsx(
            "relative mx-[3px] flex size-[38px] items-center justify-center rounded",
            active && "bg-[#f3f7cf] shadow-sm",
          )}
        >
          {icon}
          {running && (
            <span
              className={clsx(
                "absolute bottom-0 h-[3px] rounded-full",
                active ? "w-4 bg-[#0078d7]" : "w-[6px] bg-[#82885c]",
              )}
            />
          )}
        </button>
      ))}
    </nav>
    <div className="flex flex-1 items-center justify-end">
      <button type="button" aria-label="Iconos ocultos">
        <svg width="12" height="7" viewBox="0 0 12 7" fill="none" aria-hidden>
          <path d="M.5 6.5L6 1l5.5 5.5" stroke="#1a1a1a" strokeWidth="1.3" />
        </svg>
      </button>
      <button type="button" className="ml-[18px] text-center leading-4">
        ESP
        <br />
        LAA
      </button>
      <button type="button" aria-label="Red y volumen" className="ml-5 flex gap-2">
        <Svg size={16}>
          <path d="M10.5 2H.7v10h11.5V9M3 15h7M5 12v3M8 12v3" stroke="#1a1a1a" strokeWidth="1.2" />
          <path d="M12 1h3.5v5H12zM13.7 6v9" stroke="#1a1a1a" strokeWidth="1.2" />
        </Svg>
        <Svg size={16}>
          <path d="M.7 6h2.8L7 3v10l-3.5-3H.7z" stroke="#1a1a1a" strokeWidth="1.2" />
          <path d="M9 6c1 1 1 3 0 4" stroke="#1a1a1a" />
          <path d="M11 4c2.3 2 2.3 6 0 8M13 2c3.5 3 3.5 9 0 12" stroke="#a4aa76" />
        </Svg>
      </button>
      <button type="button" className="ml-[19px] text-right leading-4">
        9:15
        <br />
        25/04/2022
      </button>
      <span className="ml-2 flex size-4 items-center justify-center rounded-full bg-[#0078d7] text-[11px] leading-none text-white">
        3
      </span>
    </div>
  </footer>
);

export default function App() {
  return (
    <div className="flex h-screen flex-col overflow-hidden bg-[#dedede] font-['Liberation_Sans',Arial,sans-serif]">
      <div className="mr-px flex min-h-0 flex-1 flex-col rounded-t-lg border border-b-0 border-[#a8a8a8] bg-white [&>header]:rounded-t-lg">
        <TitleBar />
        <DocumentBar />
        <Ribbon />
        <Canvas />
        <Timeline />
      </div>
      <Taskbar />
    </div>
  );
}
